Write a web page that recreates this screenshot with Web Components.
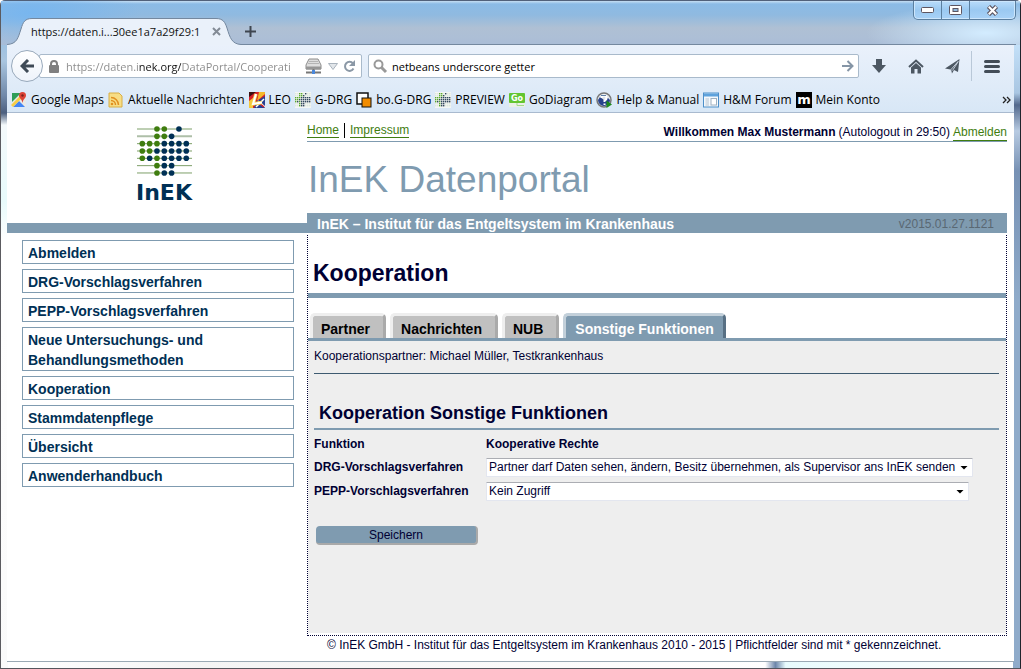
<!DOCTYPE html>
<html lang="de">
<head>
<meta charset="utf-8">
<title>InEK Datenportal</title>
<style>
  html, body { margin: 0; min-height: 100vh; }
  body {
    display: flex; flex-direction: column;
    font: 12px/16px "Liberation Sans", Arial, sans-serif; color: #000033;
    --steel: #7f9bb0; --navy: #003055; --green: #3f7d0f; --panel: #eeeeee;
    --ui: "Open Sans", "Noto Sans", sans-serif;
  }
</style>
</head>
<body>
<browser-window>
  <title-bar slot="chrome" label="https://daten.i...30ee1a7a29f29:1"></title-bar>
  <nav-bar slot="chrome"></nav-bar>
  <bookmark-bar slot="chrome">
    <bookmark-item icon="maps">Google Maps</bookmark-item>
    <bookmark-item icon="feed">Aktuelle Nachrichten</bookmark-item>
    <bookmark-item icon="leo">LEO</bookmark-item>
    <bookmark-item icon="dots">G-DRG</bookmark-item>
    <bookmark-item icon="squares">bo.G-DRG</bookmark-item>
    <bookmark-item icon="dots">PREVIEW</bookmark-item>
    <bookmark-item icon="go">GoDiagram</bookmark-item>
    <bookmark-item icon="help">Help &amp; Manual</bookmark-item>
    <bookmark-item icon="forum">H&amp;M Forum</bookmark-item>
    <bookmark-item icon="konto">Mein Konto</bookmark-item>
  </bookmark-bar>
  <portal-page>
    <side-menu slot="side">
      <menu-entry>Abmelden</menu-entry>
      <menu-entry>DRG-Vorschlagsverfahren</menu-entry>
      <menu-entry>PEPP-Vorschlagsverfahren</menu-entry>
      <menu-entry>Neue Untersuchungs- und Behandlungsmethoden</menu-entry>
      <menu-entry>Kooperation</menu-entry>
      <menu-entry>Stammdatenpflege</menu-entry>
      <menu-entry>Übersicht</menu-entry>
      <menu-entry>Anwenderhandbuch</menu-entry>
    </side-menu>
    <portal-header></portal-header>
    <content-box heading="Kooperation">
      <tab-strip slot="tabs">
        <tab-item>Partner</tab-item>
        <tab-item>Nachrichten</tab-item>
        <tab-item>NUB</tab-item>
        <tab-item active>Sonstige Funktionen</tab-item>
      </tab-strip>
      <rights-form></rights-form>
    </content-box>
    <portal-footer>© InEK GmbH - Institut für das Entgeltsystem im Krankenhaus 2010 - 2015 | Pflichtfelder sind mit * gekennzeichnet.</portal-footer>
  </portal-page>
</browser-window>

<script>
const define = (name, html) => customElements.define(name, class extends HTMLElement {
  constructor() {
    super();
    this.attachShadow({ mode: 'open' }).innerHTML =
      '<style>*{box-sizing:border-box}</style>' + (typeof html === 'function' ? '' : html);
  }
  connectedCallback() {
    if (typeof html === 'function' && !this.ready) {
      this.ready = true;
      this.shadowRoot.innerHTML += html(this);
    }
  }
});

define('browser-window', `
<style>
  :host { display: flex; flex: 1; flex-direction: column; box-sizing: border-box;
    background:
    linear-gradient(#7ab4e6, #8fbce4 24px, #a9c5df 60px, #7088a8 95px, #4c5f7e 112px, #f4f9fb 124px, #e8fafb 200px, #fff 240px, #fafafa) left / 7px 100% no-repeat,
    linear-gradient(#bcd9f0, #c5e2fa 40px, #a9c6e2 92px, #52688c 104px, #b8cbe2 130px, #7791b4 170px, #8fabca 300px, #8fabca) right / 7px 100% no-repeat,
    linear-gradient(90deg, #fff, #f4f4f4 20%, #fff 75%, #6d86aa 76%, #e8fbfd 77%, #fff) bottom / 100% 7px no-repeat, #fff;
    border-top: 1px solid #51617a; border-left: 1px solid #5b5b60; border-right: 1px solid #20242c; border-bottom: 1px solid #55555c;
    padding: 0 6px 6px; border-radius: 5px 5px 0 0; }
  .chrome { display: flex; flex-direction: column; }
  .view { flex: 1; display: flex; background: #fff; border-bottom: 1px solid #9aa9b4; }
</style>
<div class="chrome"><slot name="chrome"></slot></div>
<div class="view"><slot></slot></div>`);

define('title-bar', el => `
<style>
  :host { display: block; height: 44px; margin: 0 -6px; padding: 0 4px 0 6px;
    background: radial-gradient(ellipse 110px 34px at 30px 12px, #78b6ef, transparent),
      radial-gradient(ellipse 120px 30px at 985px 32px, #d3ecff, transparent),
      linear-gradient(#c6def2, #8bbbe6 3px, #90bae0 14px, #afc0d4 27px, #adbfd6 36px, #a9bcd6); }
  header { display: flex; height: 44px; align-items: flex-end; border-bottom: 1px solid #74889f; font: 11px/16px var(--ui); }
  .tab { position: relative; width: 234px; height: 27px; margin: 0 0 -1px 0; }
  .tab > svg { position: absolute; left: 0; top: 0; }
  .in { position: relative; display: flex; align-items: center; justify-content: space-between; height: 27px; padding: 0 20px 0 24px; color: #111; }
  button { border: 0; padding: 0; background: none; display: grid; place-items: center; }
  .new { width: 18px; height: 26px; }
  .controls { margin-left: auto; align-self: flex-start; display: flex; height: 19px; border: 1px solid #5b7f9f; border-top: 0; border-radius: 0 0 5px 5px;
    background: linear-gradient(#b9dcfa, #9bc9f1 50%, #a8d2f7); box-shadow: inset 0 0 0 1px #cce6fc; }
  .controls button { width: 28px; border-right: 1px solid #5b7f9f; }
  .controls button:last-child { width: 45px; border: 0; }
</style>
<header>
  <div class="tab">
    <svg width="234" height="27" viewBox="0 0 234 27"><path d="M0 26.5C10 26 11 20 14 11C16 4 18 .5 25 .5H209C216 .5 218 4 220 10C223 20 225 26 234 26.5V27H0Z" fill="#eaf1fa"/><path d="M0 26.5C10 26 11 20 14 11C16 4 18 .5 25 .5H209C216 .5 218 4 220 10C223 20 225 26 234 26.5" fill="none" stroke="#74889f"/></svg>
    <div class="in"><span>${el.getAttribute('label')}</span>
      <button aria-label="Tab schließen"><svg width="9" height="9"><path d="M1 1L8 8M8 1L1 8" stroke="#838b95" stroke-width="2"/></svg></button></div>
  </div>
  <button class="new" aria-label="Neuer Tab"><svg width="11" height="11"><path d="M5.5 0V11M0 5.5H11" stroke="#3f4650" stroke-width="2"/></svg></button>
  <div class="controls">
    <button aria-label="Minimieren"><svg width="13" height="6"><rect x=".5" y=".5" width="12" height="5" rx="1" fill="#fff" stroke="#5d5560"/></svg></button>
    <button aria-label="Maximieren"><svg width="13" height="11"><rect x=".5" y=".5" width="12" height="9" rx="1" fill="#fff" stroke="#5d5560"/><rect x="4" y="3.500" width="5" height="3" fill="#8fb9de" stroke="#5d5560"/></svg></button>
    <button aria-label="Schließen"><svg width="13" height="11"><path d="M2.500 1.500L10.500 9.500M10.500 1.500L2.500 9.500" stroke="#5d5560" stroke-width="4.500"/><path d="M2.800 1.800L10.200 9.200M10.200 1.800L2.800 9.200" stroke="#fff" stroke-width="2.200"/></svg></button>
  </div>
</header>`);

define('nav-bar', `
<style>
  :host { display: flex; align-items: center; height: 42px; padding: 0 2px 0 4px; font: 11px/16px var(--ui);
    background: linear-gradient(#eaf1fb, #dfebf8); }
  .back { width: 32px; height: 32px; flex: none; border-radius: 50%; border: 1px solid #98a9bb; background: linear-gradient(#fff, #eef3fa); z-index: 1; }
  button { border: 0; padding: 0; background: none; display: grid; place-items: center; flex: none; }
  .box { display: flex; align-items: center; height: 24px; border: 1px solid #a9bacb; background: #fff; border-radius: 2px; }
  .url { width: 323px; flex: none; margin-left: -4px; padding: 0 5px 0 8px; gap: 5px; }
  input { border: 0; padding: 0; outline: 0; background: none; font: inherit; min-width: 0; flex: 1; height: 20px; color: #000; }
  .url input { padding-left: 1px; background: linear-gradient(90deg, #8a8a8a 74px, #111 74px 116px, #8a8a8a 116px); -webkit-background-clip: text; background-clip: text; -webkit-text-fill-color: transparent; }
  .search { flex: 1; margin-left: 6px; padding: 0 4px; gap: 4px; }
  .tools { display: flex; align-items: center; height: 42px; padding-left: 1px; }
  .tools button { width: 37px; height: 24px; }
  .tools .menu { border-left: 1px solid #b9c8d8; height: 30px; width: 41px; }
</style>
<button class="back" aria-label="Zurück"><svg width="15" height="14"><path d="M8 1L2 7L8 13M2.500 7H14" fill="none" stroke="#3f4a56" stroke-width="3"/></svg></button>
<div class="box url">
  <svg width="12" height="13"><path d="M3 6V4a3 3 0 0 1 6 0V6" fill="none" stroke="#808080" stroke-width="2"/><rect x="1" y="5" width="10" height="8" rx="1" fill="#808080"/></svg>
  <input aria-label="Adresse" value="https://daten.inek.org/DataPortal/Cooperati">
  <svg width="18" height="16"><path d="M4 1H13L16 7V11H1V7Z" fill="#dedede" stroke="#8c8c8c"/><path d="M4 3.500H13M3 5.500H14" stroke="#b5b5b5"/><path d="M1 8.500H16V11.500H1Z" fill="#969696"/><path d="M1 14.500H16M8.500 11V14" stroke="#777" stroke-width="2"/><rect x="7" y="12" width="3" height="4" fill="#4a88dc"/></svg>
  <svg width="10" height="7"><path d="M.5.500H9.500L5 6.500Z" fill="#e2e6ea" stroke="#a9b3bd"/></svg>
  <button aria-label="Neu laden"><svg width="13" height="13"><path d="M10.500 8.500A4.500 4.500 0 1 1 10 3.500" fill="none" stroke="#8b98a6" stroke-width="2"/><path d="M12 0V6H6Z" fill="#8b98a6"/></svg></button>
</div>
<div class="box search">
  <svg width="15" height="15"><circle cx="5.500" cy="5.500" r="4" fill="none" stroke="#999" stroke-width="2"/><path d="M8.500 8.500L13 13" stroke="#999" stroke-width="3"/></svg>
  <input aria-label="Suche" value="netbeans underscore getter">
  <button aria-label="Suchen"><svg width="12" height="12"><path d="M0 6H10M5.500 1L10.500 6L5.500 11" fill="none" stroke="#8595a6" stroke-width="2"/></svg></button>
</div>
<div class="tools">
  <button aria-label="Downloads"><svg width="14" height="14"><path d="M4 0H10V6H14L7 14L0 6H4Z" fill="#4c5762"/></svg></button>
  <button aria-label="Startseite"><svg width="16" height="15"><path d="M1 8L8 1.500L15 8" fill="none" stroke="#4c5762" stroke-width="2"/><path d="M3 8.500L8 4L13 8.500V14.500H9.500V10H6.500V14.500H3Z" fill="#4c5762"/></svg></button>
  <button aria-label="Teilen"><svg width="15" height="15"><path d="M14.500 0L13 13L9 11L7 14.500L5.500 10.500L0 9.500Z" fill="#4c5762"/><path d="M13.500 2L6 10.500V14M7.500 11.500L13 3" fill="none" stroke="#dfeaf6" stroke-width=".8"/></svg></button>
  <button class="menu" aria-label="Menü"><svg width="16" height="13"><path d="M1.500 1.500H14.500M1.500 6.500H14.500M1.500 11.500H14.500" stroke="#434d58" stroke-width="3" stroke-linecap="round"/></svg></button>
</div>`);

define('bookmark-bar', `
<style>
  :host { display: flex; align-items: center; box-sizing: border-box; height: 26px; padding: 0 3px 0 4px; gap: 4px; font: 12px/16px var(--ui); color: #000;
    background: linear-gradient(#dfebf8, #d8e7f6); border-bottom: 1px solid #a9bacf; white-space: nowrap; }
  button { margin-left: auto; border: 0; padding: 0; background: none; display: grid; }
</style>
<slot></slot><button aria-label="Weitere Lesezeichen"><svg width="9" height="8"><path d="M1 1L4 4L1 7M5 1L8 4L5 7" fill="none" stroke="#222" stroke-width="1.300"/></svg></button>`);

const dotIcon = (() => {
  const rows = ['  gg k  ', '  ggk   ', 'gggkkkkk', 'ggkkkkkk', 'gkgkkkkk', '  gkk   ', '  gkk   '];
  let s = '<rect width="16" height="16" fill="#f4f6f4"/>';
  rows.forEach((r, y) => [...r].forEach((c, x) => {
    s += `<rect x="${x * 2}" y="${y * 2 + 1}" width="1.400" height="1.400" fill="${c === 'g' ? '#5aa82e' : c === 'k' ? '#33485e' : '#dfe8dc'}"/>`;
  }));
  return s;
})();
const icons = {
  maps: '<path d="M1 1H15V15H1Z" fill="#e9e9e6"/><path d="M1 1H10L1 10Z" fill="#2f9e58"/><path d="M2 15L8 9L14 15Z" fill="#4285f4"/><path d="M0 13L10 3L12 5L2 15Z" fill="#f7ce46"/><path d="M11.500 0A3.500 3.500 0 0 1 15 3.500C15 6 12 7 11.500 11C11 7 8 6 8 3.500A3.500 3.500 0 0 1 11.500 0Z" fill="#dc4437"/><circle cx="11.500" cy="3.500" r="1.200" fill="#7b231c"/>',
  feed: '<path d="M1 1H11L14 4V15H1Z" fill="#f7dd85" stroke="#d8ae45"/><circle cx="4" cy="12" r="1.300" fill="#e08f20"/><path d="M3 8.500A4.500 4.500 0 0 1 7.500 13M3 5.500A7.500 7.500 0 0 1 10.500 13" fill="none" stroke="#e08f20" stroke-width="1.500"/>',
  leo: '<path d="M0 0H16V16H0Z" fill="#d8202a"/><path d="M0 0H7L0 5Z" fill="#3a1010"/><path d="M10 0H16V2L8 9Z" fill="#f4b92a"/><path d="M0 9L4 6V16H0Z" fill="#f4c93a"/><path d="M8 9L16 4V16H5Z" fill="#28408f"/><path d="M9 9L16 15M7 15L15 7" stroke="#fff" stroke-width="1.500"/><path d="M9 10L15 15" stroke="#d8202a" stroke-width="1.500"/><path d="M7 2L4 12L13 10.500" stroke="#f6d24a" stroke-width="3.500" fill="none"/><path d="M7 2L4 12L13 10.500" stroke="#fff" stroke-width="2" fill="none"/>',
  dots: dotIcon,
  squares: '<rect x="1" y="1" width="11" height="11" fill="#fff" stroke="#111" stroke-width="1.500"/><rect x="6" y="6" width="9" height="9" fill="#f28c00" stroke="#111"/>',
  go: '<rect y="1" width="16" height="14" fill="#eaf0e6"/><rect y="1" width="16" height="10" rx="1" fill="#62c531"/><path d="M8 11V13.500H15" fill="none" stroke="#a4d98c"/><text x="8" y="9" text-anchor="middle" font-family="DejaVu Sans" font-weight="700" font-size="8" fill="#fff">Go</text>',
  help: '<circle cx="8" cy="8" r="7" fill="#dfe5ea" stroke="#777" stroke-width="1.500"/><path d="M2 8A6 6 0 0 0 14 8L12 6L8 8L4 5Z" fill="#28428c"/><path d="M5.500 6A2.500 2.500 0 1 1 8.500 8.500V10M8.500 11.500V13" stroke="#fff" stroke-width="2" fill="none"/><path d="M5 3.500H10" stroke="#5f7fa8"/><path d="M10.500 8.500L16 12.500L10.500 16Z" fill="#1d8a1d"/>',
  forum: '<rect x=".5" y="1" width="15" height="14" fill="#f4f8fc" stroke="#4d8fc9"/><path d="M1 3H15" stroke="#5ea2dc" stroke-width="3"/><path d="M2.500 7H6M2.500 9H6M2.500 11H6M2.500 13H6" stroke="#b5c3d0"/><rect x="8" y="6.500" width="5.500" height="6.500" fill="#fff" stroke="#9fb0c0"/>',
  konto: '<rect width="16" height="16" fill="#000"/><text x="8" y="12" text-anchor="middle" font-family="DejaVu Sans" font-weight="700" font-size="13" fill="#fff">m</text>'
};
define('bookmark-item', el => `
<style>:host { display: block; } a { display: flex; align-items: center; gap: 4px; color: inherit; text-decoration: none; } svg { flex: none; }</style>
<a href="#"><svg width="16" height="16" aria-hidden="true">${icons[el.getAttribute('icon')]}</svg><span><slot></slot></span></a>`);

define('portal-page', `
<style>
  :host { flex: 1; display: grid; grid-template-columns: 300px 1fr; }
  main { display: flex; flex-direction: column; margin-right: 7px; min-width: 0; }
</style>
<slot name="side"></slot><main><slot></slot></main>`);

const logo = (() => {
  const rows = ['  gg k ', '  ggk  ', 'gggkkkk', 'ggkkkkk', 'gkgkkkk', '  gkk  ', '  gkk  '];
  let s = '';
  rows.forEach((r, y) => {
    const cy = 4 + y * 7.33;
    s += `<path d="M0 ${cy}H55" stroke="${y === 1 ? '#aebfa8' : '#7d9f68'}" stroke-width="${y === 1 ? 2 : 1}"/>`;
    [...r].forEach((c, x) => { if (c !== ' ') s += `<circle cx="${5.300 + x * 7.33}" cy="${cy}" r="2.800" fill="${c === 'g' ? '#3f7d0f' : '#003055'}"/>`; });
  });
  return s;
})();
define('side-menu', `
<style>
  :host { display: block; }
  .logo { height: 120px; padding: 12px 0 0 129px; border-bottom: 10px solid var(--steel); }
  .logo svg { display: block; margin-left: 1px; }
  .logo span { display: block; font: bold 22px/26px "DejaVu Sans", sans-serif; color: var(--navy); margin-top: 3px; }
  nav { display: flex; flex-direction: column; gap: 5px; padding: 7px 13px 7px 15px; }
</style>
<div class="logo"><svg width="56" height="52" aria-hidden="true">${logo}</svg><span>InEK</span></div>
<nav><slot></slot></nav>`);
define('menu-entry', `
<style>
  :host { display: block; }
  a { display: block; border: 1px solid var(--steel); padding: 2px 60px 0 5px; font: bold 14px/20px "Liberation Sans", Arial, sans-serif; color: var(--navy); text-decoration: none; }
</style><a href="#"><slot></slot></a>`);

define('portal-header', `
<style>
  :host { display: block; }
  .top { display: flex; justify-content: space-between; align-items: flex-end; height: 29px; border-bottom: 1px solid var(--steel); }
  a { color: var(--green); text-decoration: none; border-bottom: 1px solid var(--green); }
  .links { display: flex; gap: 5px; line-height: 14px; padding-bottom: 3px; }
  .links i { width: 1px; background: #000; }
  .user { line-height: 16px; display: flex; gap: 3px; }
  h1 { margin: 0; padding: 2px 1px 0; font: 37px/72px "Liberation Sans", Arial, sans-serif; color: var(--steel); height: 71px; }
  .bar { display: flex; justify-content: space-between; padding: 0 13px 0 10px; background: var(--steel); font: bold 14px/22px "Liberation Sans", Arial, sans-serif; color: #fff; height: 20px; }
  .bar small { font: 12px/22px "Liberation Sans", Arial, sans-serif; color: #5a6873; }
</style>
<div class="top">
  <div class="links"><a href="#">Home</a><i></i><a href="#">Impressum</a></div>
  <div class="user"><b>Willkommen Max Mustermann</b><span>(Autologout in 29:50)</span><a href="#">Abmelden</a></div>
</div>
<h1>InEK Datenportal</h1>
<div class="bar"><span>InEK – Institut für das Entgeltsystem im Krankenhaus</span><small>v2015.01.27.1121</small></div>`);

define('content-box', el => `
<style>
  :host { flex: 1; display: flex; flex-direction: column; margin-top: 2px; border: 1px dotted #000033; border-top: 0; }
  h2 { margin: 0 0 15px; padding: 19px 5px 0; height: 63px; border-bottom: 5px solid var(--steel); font: bold 23px/38px "Liberation Sans", Arial, sans-serif; }
  section { flex: 1; background: var(--panel); margin-bottom: 2px; padding: 0 7px 0 6px; }
</style>
<h2>${el.getAttribute('heading')}</h2><slot name="tabs"></slot><section><slot></slot></section>`);

define('tab-strip', `
<style>:host { display: flex; gap: 4px; padding: 0 2px; border-bottom: 3px solid var(--steel); }</style><slot></slot>`);
define('tab-item', `
<style>
  :host { display: block; }
  a { display: block; height: 25px; padding: 0 13px 0 8px; border: 3px solid #eee; border-width: 3px 3px 0; border-right-color: #aaa; border-radius: 5px 5px 0 0; background: #c0c0c0;
    font: bold 14px/26px "Liberation Sans", Arial, sans-serif; color: #000; text-decoration: none; }
  :host([active]) a { background: var(--steel); color: #fff; border-color: #c3d0da; border-right-color: #587084; padding: 0 9px; }
</style><a href="#"><slot></slot></a>`);

define('rights-form', `
<style>
  :host { display: block; }
  p { margin: 0; padding: 7px 0 9px; border-bottom: 1px solid #3d5a70; }
  h3 { margin: 26px 0 3px; padding: 0 5px 2px; font: bold 18px/26px "Liberation Sans", Arial, sans-serif; border-bottom: 2px solid var(--steel); }
  table { border-collapse: collapse; }
  th { text-align: left; padding: 0; height: 24px; }
  td { padding: 0; height: 24px; }
  thead th { height: 22px; }
  th:first-child { width: 172px; }
  .pick { position: relative; display: block; width: 487px; }
  .pick.short { width: 483px; }
  .pick::after { content: ""; position: absolute; right: 5px; top: 8px; width: 8px; height: 4px; background: #000; clip-path: polygon(0 0, 100% 0, 50% 100%); pointer-events: none; }
  select { display: block; appearance: none; width: 100%; height: 19px; padding: 0 16px 0 2px; border: 1px solid #e3e6ef; border-top-color: #abadb3; border-radius: 1px; background: #fff; color: inherit; font: 12px/16px "Liberation Sans", Arial, sans-serif; }
  button { display: block; margin: 23px 2px; width: 162px; height: 19px; padding: 0; border: solid #a9a9a9; border-width: 0 2px 2px 0; border-radius: 4px; background: var(--steel); color: #000033; font: 12px/16px "Liberation Sans", Arial, sans-serif; }
</style>
<p>Kooperationspartner: Michael Müller, Testkrankenhaus</p>
<h3>Kooperation Sonstige Funktionen</h3>
<form>
  <table>
    <thead><tr><th>Funktion</th><th>Kooperative Rechte</th></tr></thead>
    <tbody>
      <tr><th><label for="drg">DRG-Vorschlagsverfahren</label></th>
        <td><span class="pick"><select id="drg"><option>Partner darf Daten sehen, ändern, Besitz übernehmen, als Supervisor ans InEK senden</option></select></span></td></tr>
      <tr><th><label for="pepp">PEPP-Vorschlagsverfahren</label></th>
        <td><span class="pick short"><select id="pepp"><option>Kein Zugriff</option></select></span></td></tr>
    </tbody>
  </table>
  <button type="button">Speichern</button>
</form>`);

define('portal-footer', `
<style>:host { display: block; padding: 1px 20px 8px; }</style><slot></slot>`);
</script>
</body>
</html>
